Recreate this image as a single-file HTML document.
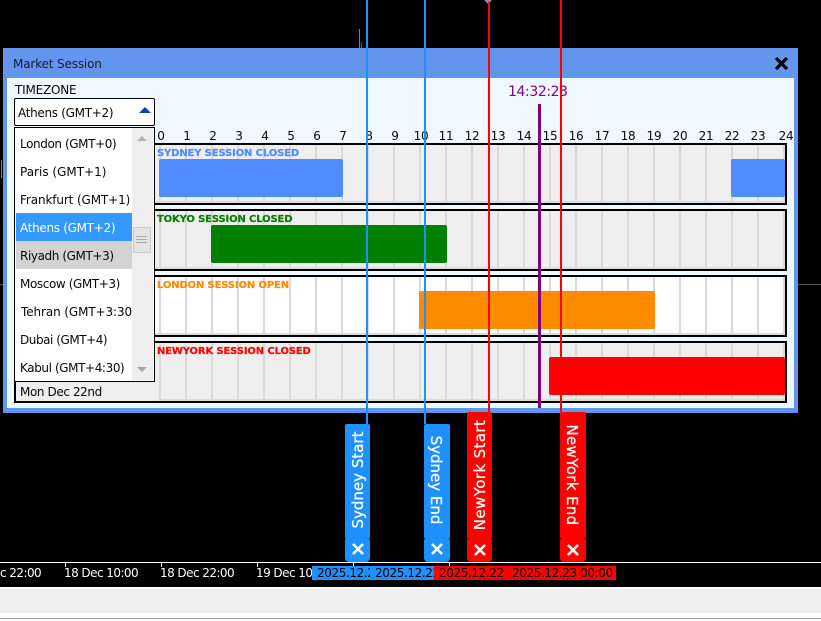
<!DOCTYPE html>
<html><head><meta charset="utf-8"><style>
html,body{margin:0;padding:0;background:#000;width:821px;height:621px;overflow:hidden}
body{position:relative;font-family:"DejaVu Sans","Liberation Sans",sans-serif;font-size:12px;color:#080808}
div,span{position:absolute;box-sizing:border-box}
.t{white-space:nowrap;line-height:14px}
.row{left:155px;width:632px;height:62px;border:2px solid #000;border-left:0;background:#eee}
.row.w{background:#fff}
.row i{position:absolute;left:0;right:0;top:0;bottom:0;border-bottom:2px solid #dcdcdc;background-image:linear-gradient(90deg,#d9d9d9 0,#d9d9d9 2px,transparent 2px,transparent 26px);background-size:26px 100%;background-position:4px 0}
.bar{border-radius:2px}
.lab{font-weight:bold;font-size:10px;line-height:12px;white-space:nowrap;left:157px;letter-spacing:-.14px;-webkit-text-stroke:.2px currentColor}
.h{top:129px;width:30px;text-align:center;line-height:14px;font-size:12px;letter-spacing:-.2px}
.li{left:20px;line-height:14px;white-space:nowrap;font-size:12px}
.v{width:2px}
.tab{border-radius:2px 2px 0 0}
.btn{height:25px;top:537px;border-radius:4px}
.rot{color:#fff;font-size:15px;white-space:nowrap;line-height:18px;width:130px;height:18px;text-align:center;-webkit-text-stroke:.25px #fff}
.tick{width:1px;height:4px;top:563px;background:#fff}
.d{color:#fff;top:566px;font-size:12px;line-height:14px;white-space:nowrap;letter-spacing:-.55px}
.k{color:#000;top:566px;font-size:12px;line-height:14px;white-space:nowrap;overflow:hidden;height:14px;letter-spacing:-.4px}
</style></head><body>
<!-- background chart bits -->
<div style="left:798px;top:284px;width:23px;height:1px;background:#555"></div>
<div style="left:0;top:284px;width:3px;height:1px;background:#555"></div>
<div style="left:1px;top:160px;width:1px;height:18px;background:#1ca0d8"></div>
<div style="left:359px;top:29px;width:1px;height:19px;background:#1ca0d8"></div>
<div style="left:361px;top:42px;width:1px;height:6px;background:#e02020"></div>
<div style="left:484px;top:0;width:0;height:0;border-left:4px solid transparent;border-right:4px solid transparent;border-top:4px solid #8a8f94"></div>

<!-- panel -->
<div style="left:3px;top:48px;width:795px;height:365px;background:#6495ED"></div>
<div style="left:7px;top:78px;width:787px;height:330px;background:#F0F8FF"></div>
<div class="t" style="left:13px;top:57px;color:#1a1a2a;letter-spacing:-.15px">Market Session</div>
<svg style="position:absolute;left:774px;top:56px" width="15" height="15" viewBox="0 0 15 15"><path d="M2 2L13 13M13 2L2 13" stroke="#000" stroke-width="3.2"/></svg>
<div class="t" style="left:15px;top:83px;letter-spacing:-.2px">TIMEZONE</div>
<div class="t" style="left:508px;top:84px;color:#800080;font-size:14px;line-height:16px;letter-spacing:-.4px">14:32:23</div>

<!-- hours -->
<div class="h" style="left:146px">0</div><div class="h" style="left:172px">1</div><div class="h" style="left:198px">2</div><div class="h" style="left:224px">3</div><div class="h" style="left:250px">4</div><div class="h" style="left:276px">5</div><div class="h" style="left:302px">6</div><div class="h" style="left:328px">7</div><div class="h" style="left:354px">8</div><div class="h" style="left:380px">9</div><div class="h" style="left:406px">10</div><div class="h" style="left:431px">11</div><div class="h" style="left:457px">12</div><div class="h" style="left:483px">13</div><div class="h" style="left:509px">14</div><div class="h" style="left:535px">15</div><div class="h" style="left:561px">16</div><div class="h" style="left:587px">17</div><div class="h" style="left:613px">18</div><div class="h" style="left:639px">19</div><div class="h" style="left:665px">20</div><div class="h" style="left:691px">21</div><div class="h" style="left:717px">22</div><div class="h" style="left:743px">23</div><div class="h" style="left:771px">24</div>

<!-- rows -->
<div class="row" style="top:143px"><i></i></div>
<div class="row" style="top:209px"><i></i></div>
<div class="row w" style="top:275px"><i></i></div>
<div class="row" style="top:341px"><i></i></div>
<div class="bar" style="left:159px;top:159px;width:184px;height:38px;background:#4F8CFF"></div>
<div class="bar" style="left:731px;top:159px;width:54px;height:38px;background:#4F8CFF"></div>
<div class="bar" style="left:211px;top:225px;width:236px;height:38px;background:#008000"></div>
<div class="bar" style="left:419px;top:291px;width:236px;height:38px;background:#FF8C00"></div>
<div class="bar" style="left:549px;top:357px;width:236px;height:38px;background:#FF0000"></div>
<div class="lab" style="top:148px;color:#4F8CFF">SYDNEY SESSION CLOSED</div>
<div class="lab" style="top:214px;color:#008000">TOKYO SESSION CLOSED</div>
<div class="lab" style="top:280px;color:#FF8C00">LONDON SESSION OPEN</div>
<div class="lab" style="top:346px;color:#FF0000">NEWYORK SESSION CLOSED</div>

<!-- date box -->
<div style="left:14px;top:375px;width:145px;height:28px;border:solid #000;border-width:0 0 2px 2px;background:#eee"></div>
<div class="li" style="top:385px;letter-spacing:-.4px">Mon Dec 22nd</div>

<!-- select -->
<div style="left:14px;top:98px;width:141px;height:28px;border:1px solid #000;border-radius:2px;background:#fff"></div>
<div class="li" style="left:18px;top:106px;letter-spacing:-.3px">Athens (GMT+2)</div>
<div style="left:139px;top:107px;width:0;height:0;border-left:6px solid transparent;border-right:6px solid transparent;border-bottom:6px solid #0a3cc0"></div>

<!-- list -->
<div style="left:14px;top:127px;width:141px;height:255px;border:1px solid #000;background:#fff"></div>
<div style="left:132px;top:128px;width:21px;height:252px;background:#eee"></div>
<div style="left:16px;top:213px;width:116px;height:28px;background:#3399FF"></div>
<div style="left:16px;top:241px;width:116px;height:28px;background:#D3D3D3"></div>
<div class="li" style="top:137px;letter-spacing:-.4px">London (GMT+0)</div>
<div class="li" style="top:165px">Paris (GMT+1)</div>
<div class="li" style="top:193px;letter-spacing:-.12px">Frankfurt (GMT+1)</div>
<div class="li" style="top:221px;color:#fff;letter-spacing:-.3px">Athens (GMT+2)</div>
<div class="li" style="top:249px;letter-spacing:-.4px">Riyadh (GMT+3)</div>
<div class="li" style="top:277px;letter-spacing:-.4px">Moscow (GMT+3)</div>
<div class="li" style="left:21px;top:305px;width:111px;overflow:hidden;letter-spacing:-.1px">Tehran (GMT+3:30)</div>
<div class="li" style="top:333px;letter-spacing:-.45px">Dubai (GMT+4)</div>
<div class="li" style="top:361px;letter-spacing:-.4px">Kabul (GMT+4:30)</div>
<div style="left:137px;top:136px;width:0;height:0;border-left:5px solid transparent;border-right:5px solid transparent;border-bottom:5px solid #b4b4b4"></div>
<div style="left:137px;top:367px;width:0;height:0;border-left:5px solid transparent;border-right:5px solid transparent;border-top:5px solid #a8a8a8"></div>
<div style="left:133px;top:227px;width:18px;height:26px;border:1px solid #ccc;background:#e4e4e4"></div>
<div style="left:136px;top:236px;width:11px;height:7px;border-top:1px solid #aaa;border-bottom:1px solid #aaa"></div>
<div style="left:136px;top:239px;width:11px;height:1px;background:#aaa"></div>

<!-- vertical lines -->
<div class="v" style="left:366px;top:0;height:424px;background:#1E90FF"></div>
<div class="v" style="left:424px;top:0;height:424px;background:#1E90FF"></div>
<div class="v" style="left:488px;top:2px;height:410px;background:#FF0000"></div>
<div class="v" style="left:560px;top:0;height:412px;background:#FF0000"></div>
<div style="left:538px;top:104px;width:3px;height:304px;background:#800080"></div>

<!-- tabs -->
<div class="tab" style="left:345px;width:25px;top:424px;height:114px;background:#1E90FF"></div>
<div class="tab" style="left:424px;width:26px;top:424px;height:114px;background:#1E90FF"></div>
<div class="tab" style="left:467px;width:25px;top:412px;height:126px;background:#FF0000"></div>
<div class="tab" style="left:560px;width:26px;top:412px;height:126px;background:#FF0000"></div>
<div class="btn" style="left:345px;width:25px;background:#1E90FF"></div>
<div class="btn" style="left:424px;width:26px;background:#1E90FF"></div>
<div class="btn" style="left:467px;width:25px;background:#FF0000"></div>
<div class="btn" style="left:560px;width:26px;background:#FF0000"></div>
<div class="rot" style="left:293px;top:471px;transform:rotate(-90deg)">Sydney Start</div>
<div class="rot" style="left:371px;top:471px;transform:rotate(90deg)">Sydney End</div>
<div class="rot" style="left:415px;top:466px;transform:rotate(-90deg);letter-spacing:.4px">NewYork Start</div>
<div class="rot" style="left:507px;top:466px;transform:rotate(90deg);letter-spacing:.35px">NewYork End</div>
<svg style="position:absolute;left:352px;top:543px" width="12" height="12" viewBox="0 0 12 12"><path d="M1 1L11 11M11 1L1 11" stroke="#fff" stroke-width="2.6"/></svg>
<svg style="position:absolute;left:431px;top:543px" width="12" height="12" viewBox="0 0 12 12"><path d="M1 1L11 11M11 1L1 11" stroke="#fff" stroke-width="2.6"/></svg>
<svg style="position:absolute;left:474px;top:544px" width="12" height="12" viewBox="0 0 12 12"><path d="M1 1L11 11M11 1L1 11" stroke="#fff" stroke-width="2.6"/></svg>
<svg style="position:absolute;left:567px;top:544px" width="12" height="12" viewBox="0 0 12 12"><path d="M1 1L11 11M11 1L1 11" stroke="#fff" stroke-width="2.6"/></svg>

<!-- axis -->
<div style="left:0;top:562px;width:821px;height:1px;background:#fff"></div>
<div class="tick" style="left:65px"></div><div class="tick" style="left:161px"></div><div class="tick" style="left:257px"></div><div class="tick" style="left:353px"></div><div class="tick" style="left:449px"></div>
<div class="d" style="left:0">c 22:00</div>
<div class="d" style="left:64px">18 Dec 10:00</div>
<div class="d" style="left:160px">18 Dec 22:00</div>
<div class="d" style="left:256px;width:56px;overflow:hidden;height:14px">19 Dec 10:00</div>
<div style="left:312px;top:566px;width:122px;height:14px;background:#1E90FF"></div>
<div style="left:434px;top:566px;width:182px;height:14px;background:#FF0000"></div>
<div class="k" style="left:317px;width:53px">2025.12.22</div>
<div class="k" style="left:375px;width:59px">2025.12.22</div>
<div class="k" style="left:439px">2025.12.22</div>
<div class="k" style="left:512px">2025.12.23 00:00</div>

<!-- bottom -->
<div style="left:0;top:587px;width:821px;height:34px;background:#fff"></div>
<div style="left:0;top:589px;width:821px;height:24px;background:#efefef"></div>
<div style="left:0;top:618px;width:821px;height:1px;background:#a0a0a0"></div>
</body></html>
